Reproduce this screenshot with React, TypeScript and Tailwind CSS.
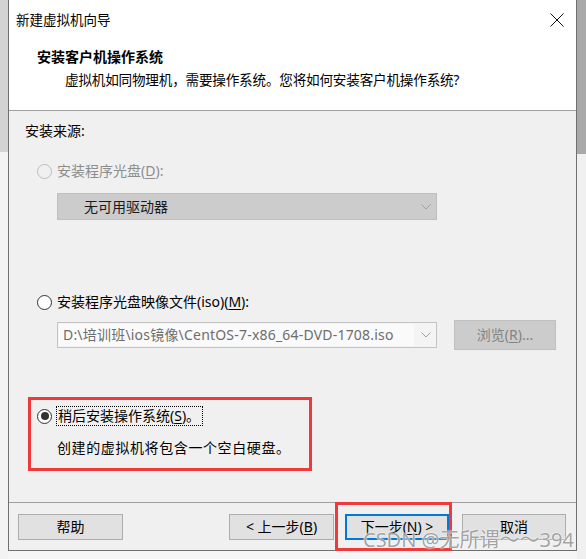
const Radio = ({ checked = false, disabled = false }: { checked?: boolean; disabled?: boolean }) => (
  <span
    className={`flex h-[15px] w-[15px] shrink-0 items-center justify-center rounded-full border ${
      disabled ? "border-[#bcbcbc] bg-[#f0f0f0]" : "border-[#333333] bg-white"
    }`}
  >
    {checked && <span className="h-[8px] w-[8px] rounded-full bg-[#333333]" />}
  </span>
);

const Chevron = () => (
  <svg width="10" height="6" viewBox="0 0 10 6" className="shrink-0">
    <path d="M0.5 0.5 L5 5 L9.5 0.5" fill="none" stroke="#a0a0a0" strokeWidth="1" />
  </svg>
);

const Btn = ({ children, w, focused = false, extra = "" }: { children: React.ReactNode; w: string; focused?: boolean; extra?: string }) => (
  <div
    className={`flex h-[26px] ${w} items-center justify-center bg-[#e1e1e1] ${
      focused ? "border-2 border-[#0078d7]" : "border border-[#adadad]"
    } ${extra}`}
  >
    {children}
  </div>
);

export default function App() {
  return (
    <div className="flex h-[559px] w-[586px] overflow-hidden text-[14px] leading-[20px] text-black [font-family:'Segoe_UI','Noto_Sans','Noto_Sans_CJK_SC',sans-serif]">
      <div className="w-[8px] shrink-0 bg-[linear-gradient(to_bottom,#d3d3d3_0,#d3d3d3_152px,#f3f3f3_152px)]" />

      <div className="relative flex w-[569px] shrink-0 flex-col">
        <div className="flex h-[551px] flex-col border-x border-b border-[#6f6f6f] bg-[#f0f0f0]">
          {/* title bar */}
          <div className="flex h-[40px] items-center justify-between bg-white pl-[7px] pr-[12px]">
            <span className="text-[13.5px]">新建虚拟机向导</span>
            <svg width="14" height="14" viewBox="0 0 14 14">
              <path d="M0.5 0.5 L13.5 13.5 M13.5 0.5 L0.5 13.5" stroke="#111" strokeWidth="1" />
            </svg>
          </div>

          {/* header */}
          <div className="h-[71px] border-b border-[#a0a0a0] bg-white pt-[7px]">
            <p className="pl-[28px] font-bold">安装客户机操作系统</p>
            <p className="mt-[3px] whitespace-nowrap pl-[56px] text-[13.6px] tracking-[-0.2px]">
              虚拟机如同物理机，需要操作系统。您将如何安装客户机操作系统?
            </p>
          </div>

          {/* body */}
          <div className="flex h-[391px] flex-col">
            <p className="ml-[16px] mt-[10px]">安装来源:</p>

            <div className="ml-[28px] mt-[20px] flex h-[20px] items-center gap-[5px] text-[#8d8d8d]">
              <Radio disabled />
              <span>
                安装程序光盘(<span className="underline underline-offset-2">D</span>):
              </span>
            </div>

            <div className="ml-[48px] mt-[12px] flex h-[27px] w-[380px] items-center justify-between border border-[#bfbfbf] bg-[#cccccc] pl-[26px] pr-[5px]">
              <span className="text-[#1a1a1a]">无可用驱动器</span>
              <Chevron />
            </div>

            <div className="ml-[28px] mt-[72px] flex h-[20px] items-center gap-[5px]">
              <Radio />
              <span>
                安装程序光盘映像文件(iso)(<span className="underline underline-offset-2">M</span>):
              </span>
            </div>

            <div className="ml-[48px] mt-[8px] flex h-[30px] items-center gap-[17px]">
              <div className="flex h-[26px] w-[380px] items-center border border-[#c3c3c3] bg-[#f4f4f4] pr-[5px]">
                <span className="ml-[1px] flex h-[22px] w-[355px] items-center whitespace-nowrap bg-[#fafafa] pl-[4px] tracking-[0.2px] text-[#6d6d6d]">
                  D:\培训班\ios镜像\CentOS-7-x86_64-DVD-1708.iso
                </span>
                <span className="ml-auto">
                  <Chevron />
                </span>
              </div>
              <div className="flex h-[30px] w-[102px] items-center justify-center border border-[#bfbfbf] bg-[#cccccc] text-[#838383]">
                浏览(<span className="underline underline-offset-2">R</span>)...
              </div>
            </div>

            <div className="ml-[19px] mt-[47px] h-[74px] w-[284px] border-[3px] border-[#ee3a3a] pl-[6px] pt-[6px]">
              <div className="flex h-[20px] items-center gap-[4px]">
                <Radio checked />
                <span className="flex h-[20px] items-center border border-dotted border-black pl-[1px] pr-[2px]">
                  稍后安装操作系统(<span className="underline underline-offset-2">S</span>)。
                </span>
              </div>
              <p className="ml-[20px] mt-[12px] whitespace-nowrap tracking-[0.6px]">创建的虚拟机将包含一个空白硬盘。</p>
            </div>
          </div>

          {/* footer */}
          <div className="flex h-[48px] border-t border-[#a0a0a0] pl-[9px] pr-[10px] pt-[11px]">
            <Btn w="w-[105px]">帮助</Btn>
            <Btn w="w-[105px]" extra="ml-auto">
              &lt; 上一步(<span className="underline underline-offset-2">B</span>)
            </Btn>
            <Btn w="w-[104px]" focused extra="ml-[11px]">
              下一步(<span className="underline underline-offset-2">N</span>) &gt;
            </Btn>
            <Btn w="w-[104px]" extra="ml-[13px]">取消</Btn>
          </div>
        </div>
        <div className="flex-1 bg-[#f6f6f6]" />

        {/* annotation box */}
        <div className="absolute left-[327px] top-[502px] h-[49px] w-[117px] border-[3px] border-[#ee3a3a]" />

        {/* watermark */}
        <div className="absolute left-[355px] top-[528px] whitespace-nowrap text-[20px] leading-[24px] text-[#8a8a8a]/80 [text-shadow:0_0_2px_#fff,0_0_1px_#fff]">
          CSDN @无所谓～～394
        </div>
      </div>

      <div className="flex-1 bg-[linear-gradient(to_bottom,#a9a9a9_0,#a9a9a9_154px,#f0f0f0_154px)]" />
    </div>
  );
}
